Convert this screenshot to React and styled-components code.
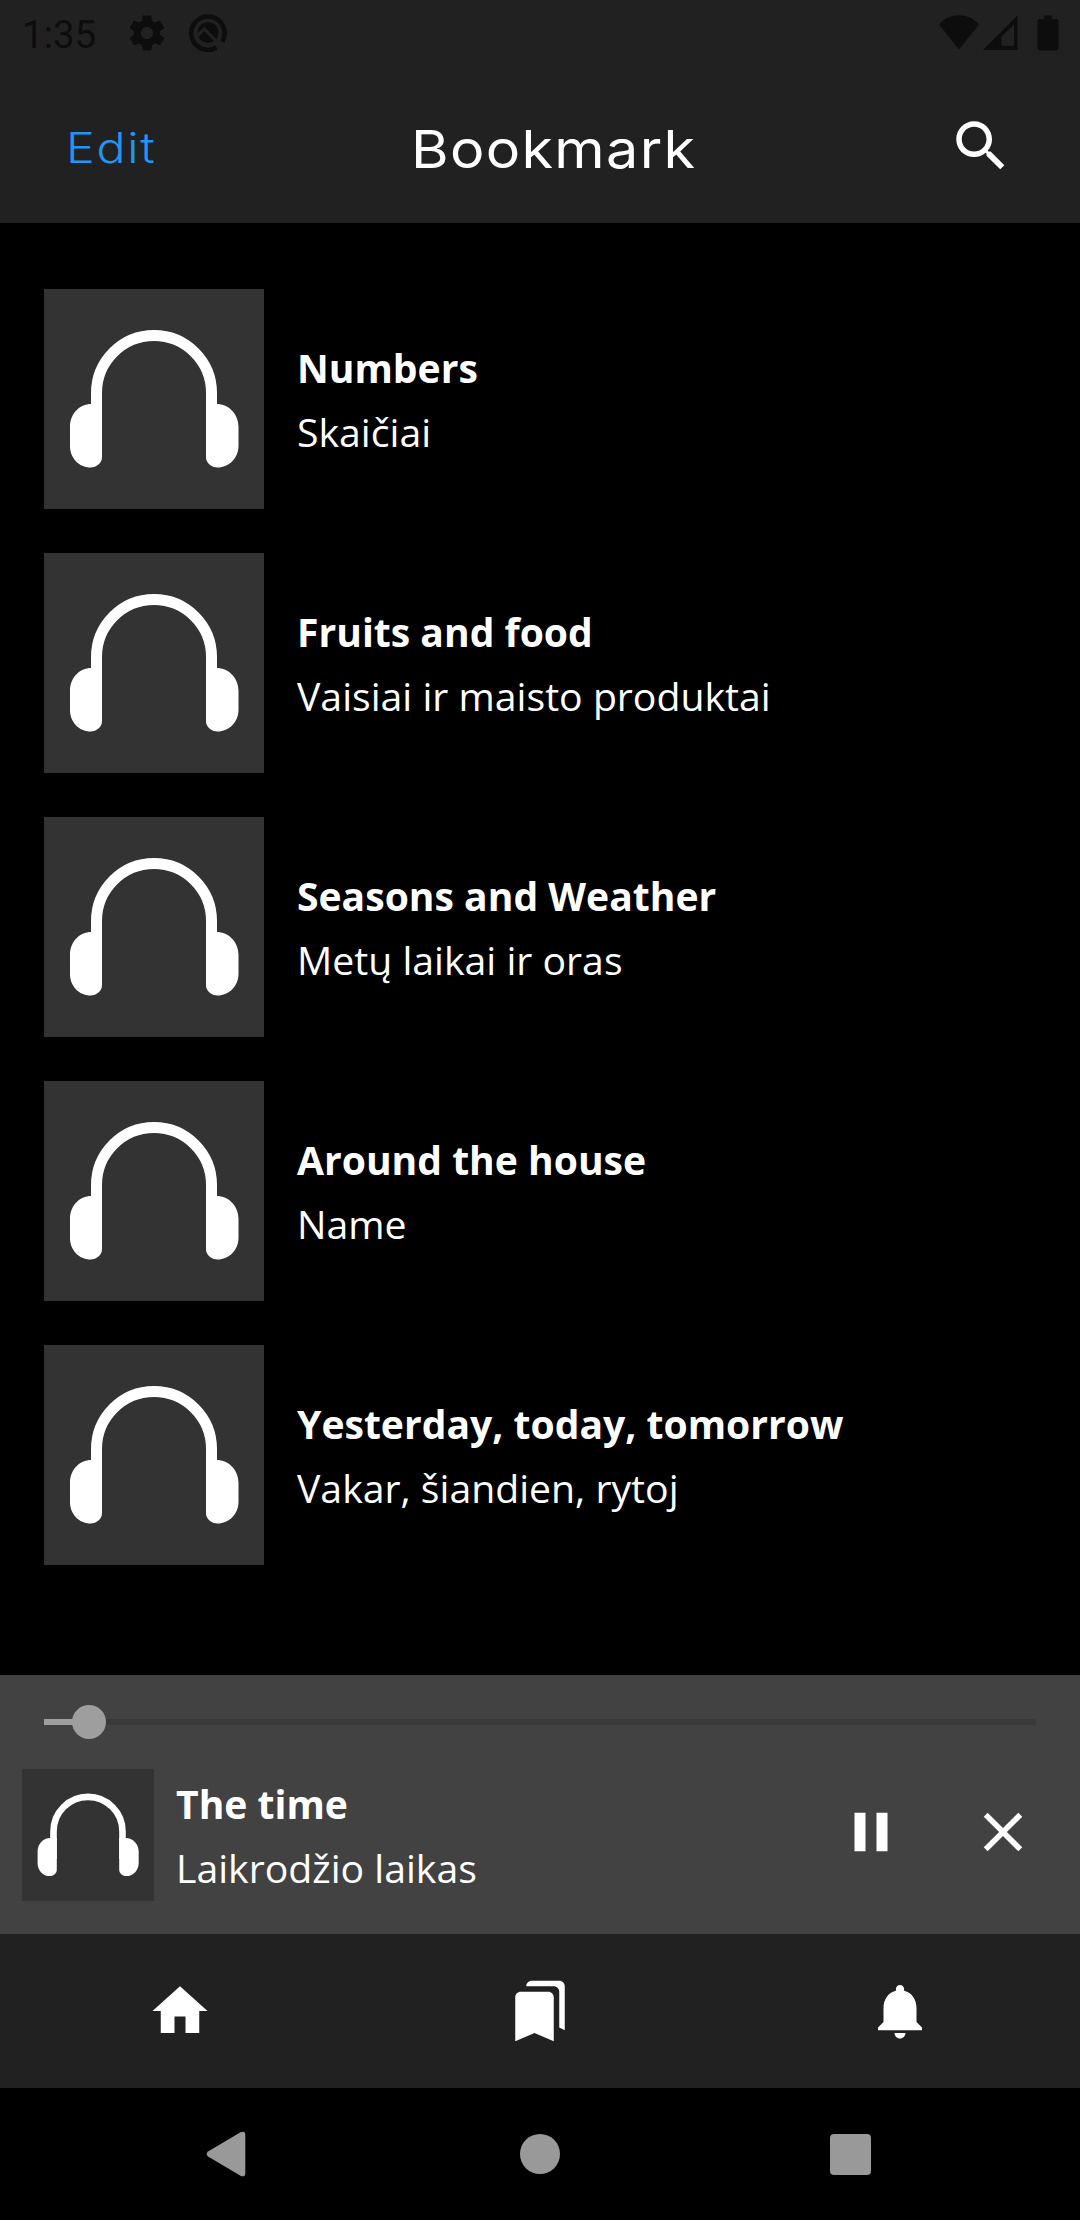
import styled, { createGlobalStyle } from "styled-components";

const bookmarks = [
  { title: "Numbers", subtitle: "Skaičiai" },
  { title: "Fruits and food", subtitle: "Vaisiai ir maisto produktai" },
  { title: "Seasons and Weather", subtitle: "Metų laikai ir oras" },
  { title: "Around the house", subtitle: "Name" },
  { title: "Yesterday, today, tomorrow", subtitle: "Vakar, šiandien, rytoj" },
];

const playing = { title: "The time", subtitle: "Laikrodžio laikas", progress: 4.55 };

const icons = {
  search:
    "M15.5 14h-.79l-.28-.27C15.41 12.59 16 11.11 16 9.5 16 5.91 13.09 3 9.5 3S3 5.91 3 9.5 5.91 16 9.5 16c1.61 0 3.09-.59 4.23-1.57l.27.28v.79l5 4.99L20.49 19l-4.99-5zm-6 0C7.01 14 5 11.99 5 9.5S7.01 5 9.5 5 14 7.01 14 9.5 11.99 14 9.5 14z",
  pause: "M6 19h4V5H6v14zm8-14v14h4V5h-4z",
  close:
    "M19 6.41L17.59 5 12 10.59 6.41 5 5 6.41 10.59 12 5 17.59 6.41 19 12 13.41 17.59 19 19 17.59 13.41 12z",
  home: "M10 20v-6h4v6h5v-8h3L12 3 2 12h3v8z",
  bookmarks:
    "M19 18l2 1V3c0-1.1-.9-2-2-2H8.99C7.89 1 7 1.9 7 3h10c1.1 0 2 .9 2 2v13zM15 5H5c-1.1 0-2 .9-2 2v16l7-3 7 3V7c0-1.1-.9-2-2-2z",
  bell: "M12 22c1.1 0 2-.9 2-2h-4c0 1.1.89 2 2 2zm6-6v-5c0-3.07-1.64-5.64-4.5-6.32V4c0-.83-.67-1.5-1.5-1.5s-1.5.67-1.5 1.5v.68C7.63 5.36 6 7.92 6 11v5l-2 2v1h16v-1l-2-2z",
  settings:
    "M19.43 12.98c.04-.32.07-.64.07-.98s-.03-.66-.07-.98l2.11-1.65c.19-.15.24-.42.12-.64l-2-3.46c-.12-.22-.39-.3-.61-.22l-2.49 1c-.52-.4-1.08-.73-1.69-.98l-.38-2.65C14.46 2.18 14.25 2 14 2h-4c-.25 0-.46.18-.49.42l-.38 2.65c-.61.25-1.17.59-1.69.98l-2.49-1c-.23-.09-.49 0-.61.22l-2 3.46c-.13.22-.07.49.12.64l2.11 1.65c-.04.32-.07.65-.07.98s.03.66.07.98l-2.11 1.65c-.19.15-.24.42-.12.64l2 3.46c.12.22.39.3.61.22l2.49-1c.52.4 1.08.73 1.69.98l.38 2.65c.03.24.24.42.49.42h4c.25 0 .46-.18.49-.42l.38-2.65c.61-.25 1.17-.59 1.69-.98l2.49 1c.23.09.49 0 .61-.22l2-3.46c.12-.22.07-.49-.12-.64l-2.11-1.65zM12 15.5c-1.93 0-3.5-1.57-3.5-3.5s1.57-3.5 3.5-3.5 3.5 1.57 3.5 3.5-1.57 3.5-3.5 3.5z",
};

const Icon = ({ name, size = 66 }) => (
  <Svg width={size} height={size} viewBox="0 0 24 24" fill="currentColor">
    <path d={icons[name]} />
  </Svg>
);

const Cover = ({ size }) => (
  <CoverBox $size={size}>
    <Svg width={size} height={size} viewBox="0 0 220 220">
      <path
        d="M52.5 150V104a57.5 57.5 0 0 1 115 0V150"
        fill="none"
        stroke="#fff"
        strokeWidth="11"
      />
      <path
        d="M58 115V168C58 174 52.500 178.500 46.500 178.500C35 178.500 26 169 26 157V138C26 125 35 115 47.500 115ZM162 115V168C162 174 167.500 178.500 173.500 178.500C185 178.500 194.500 169 194.500 157V138C194.500 125 185 115 172.500 115Z"
        fill="#fff"
      />
    </Svg>
  </CoverBox>
);

const TrackText = ({ title, subtitle }) => (
  <TextColumn>
    <TrackTitle>{title}</TrackTitle>
    <TrackSubtitle>{subtitle}</TrackSubtitle>
  </TextColumn>
);

const Status = () => (
  <StatusBar>
    <StatusGroup>
      <Clock>1:35</Clock>
      <Icon name="settings" size={42} />
      <RingIcon width="40" height="40" viewBox="0 0 40 40">
        <path
          d="M28.500 34.500A16.700 16.700 0 1 1 34.200 28.800"
          fill="none"
          stroke="currentColor"
          strokeWidth="4.600"
        />
        <circle cx="20" cy="19.500" r="10.500" fill="currentColor" />
        <path
          d="M7.500 24.500L16.300 16L33 33"
          fill="none"
          stroke="#212121"
          strokeWidth="3.200"
        />
      </RingIcon>
    </StatusGroup>
    <StatusGroup>
      <Svg width="40" height="36" viewBox="0 0 40 36" fill="currentColor">
        <path d="M0 9.500C11 -2.700 29 -2.700 40 9.500L20 34.500Z" />
      </Svg>
      <SignalIcon width="35" height="36" viewBox="0 0 35 36" fill="currentColor">
        <path fillRule="evenodd" d="M0 35H34.500V0.500ZM18.500 31H31V9.500L18.500 21.500Z" />
      </SignalIcon>
      <Svg width="22" height="36" viewBox="0 0 22 36" fill="currentColor">
        <path d="M7 0.500H15V4H19.500Q21.500 4 21.500 6V33.500Q21.500 35.500 19.500 35.500H2.500Q0.500 35.500 0.500 33.500V6Q0.500 4 2.500 4H7Z" />
      </Svg>
    </StatusGroup>
  </StatusBar>
);

const Player = ({ track }) => (
  <PlayerPanel>
    <Slider>
      <SliderFill style={{ width: `${track.progress}%` }}>
        <SliderThumb />
      </SliderFill>
    </Slider>
    <PlayerRow>
      <Cover size={132} />
      <TrackText title={track.title} subtitle={track.subtitle} />
      <Controls>
        <IconButton aria-label="Pause">
          <Icon name="pause" />
        </IconButton>
        <IconButton aria-label="Close">
          <Icon name="close" />
        </IconButton>
      </Controls>
    </PlayerRow>
  </PlayerPanel>
);

const App = () => {
  const BookmarkList = bookmarks.map((data, idx) => (
    <Bookmark key={idx}>
      <Cover size={220} />
      <TrackText title={data.title} subtitle={data.subtitle} />
    </Bookmark>
  ));

  return (
    <Screen>
      <GlobalStyle />
      <Header>
        <Status />
        <AppBar>
          <EditButton>Edit</EditButton>
          <Title>Bookmark</Title>
          <SearchButton aria-label="Search">
            <Icon name="search" />
          </SearchButton>
        </AppBar>
      </Header>
      <List>{BookmarkList}</List>
      <Player track={playing} />
      <TabBar>
        <Tab aria-label="Home">
          <Icon name="home" />
        </Tab>
        <Tab aria-label="Bookmarks">
          <Icon name="bookmarks" />
        </Tab>
        <Tab aria-label="Notifications">
          <Icon name="bell" />
        </Tab>
      </TabBar>
      <SystemBar>
        <Svg width="40" height="46" viewBox="0 0 40 46" fill="#999">
          <path d="M2 20.500L34.500 1.200Q39.300 -0.700 39.300 4V42Q39.300 46.700 34.500 44.800L2 25.500Q-0.600 23 2 20.500Z" />
        </Svg>
        <HomeDot />
        <RecentSquare />
      </SystemBar>
    </Screen>
  );
};

const GlobalStyle = createGlobalStyle`
  body {
    margin: 0;
    background-color: #000;
  }

  button {
    padding: 0;
    border: 0;
    background: none;
    color: inherit;
    font: inherit;
  }
`;

const Svg = styled.svg`
  display: block;
  flex-shrink: 0;
`;

const Screen = styled.div`
  width: 1080px;
  height: 2220px;
  display: flex;
  flex-direction: column;
  overflow: hidden;
  background-color: #000;
  color: white;
  font-family: "Open Sans", "Noto Sans", sans-serif;
`;

const Header = styled.header`
  height: 223px;
  background-color: #212121;
`;

const StatusBar = styled.div`
  height: 69px;
  box-sizing: border-box;
  padding: 0 21px 3px 22px;
  display: flex;
  align-items: center;
  justify-content: space-between;
  color: #0d0d0d;
`;

const StatusGroup = styled.div`
  display: flex;
  align-items: center;
`;

const Clock = styled.div`
  width: 104px;
  font-family: Roboto, sans-serif;
  font-size: 38.5px;
  line-height: 45px;
  padding-top: 2px;
`;

const RingIcon = styled(Svg)`
  margin-left: 20px;
`;

const SignalIcon = styled(Svg)`
  margin: 0 19px 0 4px;
`;

const AppBar = styled.div`
  height: 154px;
  display: flex;
  align-items: center;
  font-family: Inter, sans-serif;
`;

const EditButton = styled.button`
  && {
    width: 411px;
    padding: 3px 0 0 66px;
    color: #2196f3;
    font-size: 42px;
    font-weight: 300;
    line-height: 54px;
    letter-spacing: 1.5px;
    text-align: left;
    transform: scaleX(1.15);
    transform-origin: 66px 0;
  }
`;

const Title = styled.h1`
  margin: 0;
  padding-top: 6px;
  font-size: 52.5px;
  font-weight: 400;
  line-height: 66px;
  letter-spacing: 1.2px;
  transform: scaleX(1.095);
  transform-origin: 0 0;
`;

const SearchButton = styled.button`
  && {
    margin: 0 66px 0 auto;
  }
`;

const List = styled.main`
  flex: 1;
  padding-top: 44px;
`;

const Bookmark = styled.div`
  height: 264px;
  box-sizing: border-box;
  padding: 0 44px;
  display: flex;
  align-items: center;
  gap: 33px;
`;

const CoverBox = styled.div`
  width: ${(props) => props.$size}px;
  height: ${(props) => props.$size}px;
  flex-shrink: 0;
  background-color: #333;
`;

const TextColumn = styled.div`
  display: flex;
  flex-direction: column;
  gap: 11px;
  white-space: nowrap;
`;

const TrackTitle = styled.div`
  font-size: 39.1px;
  font-weight: 700;
  line-height: 53px;
`;

const TrackSubtitle = styled.div`
  font-size: 39.2px;
  font-weight: 400;
  line-height: 53px;
`;

const PlayerPanel = styled.section`
  height: 259px;
  background-color: #424242;
`;

const Slider = styled.div`
  height: 6px;
  margin: 0 44px;
  border-top: 44px solid #424242;
  border-bottom: 44px solid #424242;
  background-color: #3a3a3a;
`;

const SliderFill = styled.div`
  position: relative;
  height: 100%;
  background-color: #9e9e9e;
`;

const SliderThumb = styled.div`
  position: absolute;
  top: -14px;
  right: -17px;
  width: 34px;
  height: 34px;
  border-radius: 50%;
  background-color: #9e9e9e;
`;

const PlayerRow = styled.div`
  display: flex;
  align-items: center;
  gap: 22px;
  padding: 0 11px 0 22px;
`;

const Controls = styled.div`
  display: flex;
  margin-left: auto;
  padding-bottom: 6px;
`;

const IconButton = styled.button`
  && {
    width: 132px;
    display: flex;
    justify-content: center;
  }
`;

const TabBar = styled.nav`
  height: 154px;
  display: grid;
  grid-template-columns: repeat(3, 1fr);
  background-color: #212121;
`;

const Tab = styled.button`
  && {
    display: flex;
    align-items: center;
    justify-content: center;
  }
`;

const SystemBar = styled.div`
  height: 132px;
  box-sizing: border-box;
  padding: 0 209px 0 206px;
  display: flex;
  align-items: center;
  background-color: #000;
`;

const HomeDot = styled.div`
  width: 40px;
  height: 40px;
  margin-left: 274px;
  border-radius: 50%;
  background-color: #999;
`;

const RecentSquare = styled.div`
  width: 41px;
  height: 41px;
  margin: 1px 0 0 270px;
  border-radius: 4px;
  background-color: #999;
`;

export default App;
